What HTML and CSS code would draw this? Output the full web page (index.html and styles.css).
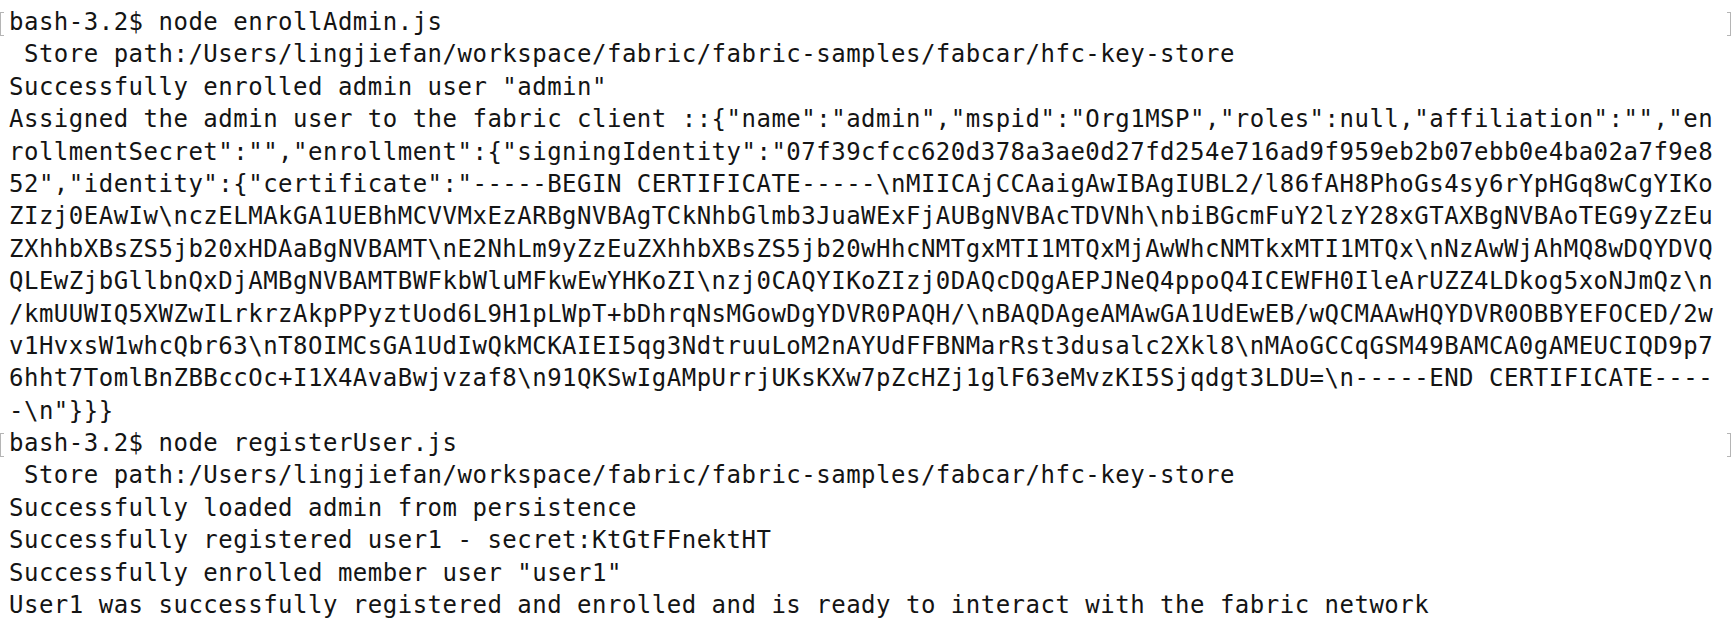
FILE: index.html
```html
<!DOCTYPE html>
<html>
<head>
<meta charset="utf-8">
<link rel="stylesheet" href="styles.css">
</head>
<body>
<div class="term">
<div class="line mark">bash-3.2$ node enrollAdmin.js</div>
<div class="line"> Store path:/Users/lingjiefan/workspace/fabric/fabric-samples/fabcar/hfc-key-store</div>
<div class="line">Successfully enrolled admin user "admin"</div>
<div class="line">Assigned the admin user to the fabric client ::{"name":"admin","mspid":"Org1MSP","roles":null,"affiliation":"","en</div>
<div class="line">rollmentSecret":"","enrollment":{"signingIdentity":"07f39cfcc620d378a3ae0d27fd254e716ad9f959eb2b07ebb0e4ba02a7f9e8</div>
<div class="line">52","identity":{"certificate":"-----BEGIN CERTIFICATE-----\nMIICAjCCAaigAwIBAgIUBL2/l86fAH8PhoGs4sy6rYpHGq8wCgYIKo</div>
<div class="line">ZIzj0EAwIw\nczELMAkGA1UEBhMCVVMxEzARBgNVBAgTCkNhbGlmb3JuaWExFjAUBgNVBAcTDVNh\nbiBGcmFuY2lzY28xGTAXBgNVBAoTEG9yZzEu</div>
<div class="line">ZXhhbXBsZS5jb20xHDAaBgNVBAMT\nE2NhLm9yZzEuZXhhbXBsZS5jb20wHhcNMTgxMTI1MTQxMjAwWhcNMTkxMTI1MTQx\nNzAwWjAhMQ8wDQYDVQ</div>
<div class="line">QLEwZjbGllbnQxDjAMBgNVBAMTBWFkbWluMFkwEwYHKoZI\nzj0CAQYIKoZIzj0DAQcDQgAEPJNeQ4ppoQ4ICEWFH0IleArUZZ4LDkog5xoNJmQz\n</div>
<div class="line">/kmUUWIQ5XWZwILrkrzAkpPPyztUod6L9H1pLWpT+bDhrqNsMGowDgYDVR0PAQH/\nBAQDAgeAMAwGA1UdEwEB/wQCMAAwHQYDVR0OBBYEFOCED/2w</div>
<div class="line">v1HvxsW1whcQbr63\nT8OIMCsGA1UdIwQkMCKAIEI5qg3NdtruuLoM2nAYUdFFBNMarRst3dusalc2Xkl8\nMAoGCCqGSM49BAMCA0gAMEUCIQD9p7</div>
<div class="line">6hht7TomlBnZBBccOc+I1X4AvaBwjvzaf8\n91QKSwIgAMpUrrjUKsKXw7pZcHZj1glF63eMvzKI5Sjqdgt3LDU=\n-----END CERTIFICATE----</div>
<div class="line">-\n"}}}</div>
<div class="line mark">bash-3.2$ node registerUser.js</div>
<div class="line"> Store path:/Users/lingjiefan/workspace/fabric/fabric-samples/fabcar/hfc-key-store</div>
<div class="line">Successfully loaded admin from persistence</div>
<div class="line">Successfully registered user1 - secret:KtGtFFnektHT</div>
<div class="line">Successfully enrolled member user "user1"</div>
<div class="line">User1 was successfully registered and enrolled and is ready to interact with the fabric network</div>
</div>
</body>
</html>
```
FILE: styles.css
```css
html, body {
  margin: 0;
  padding: 0;
  background: #ffffff;
  overflow: hidden;
}
.term {
  padding: 6px 0 0 9px;
  font-family: "DejaVu Sans Mono", "Liberation Mono", monospace;
  font-size: 24px;
  letter-spacing: 0.5px;
  line-height: 32.4px;
  color: #141414;
}
.line {
  position: relative;
  height: 32.4px;
  white-space: pre;
}
.mark::before {
  content: "";
  position: absolute;
  left: -9px;
  top: 6px;
  width: 3px;
  height: 22px;
  border: 1px solid #b5b5b5;
  border-right: none;
}
.mark::after {
  content: "";
  position: absolute;
  left: 1718px;
  top: 6px;
  width: 3px;
  height: 22px;
  border: 1px solid #b5b5b5;
  border-left: none;
}
```
